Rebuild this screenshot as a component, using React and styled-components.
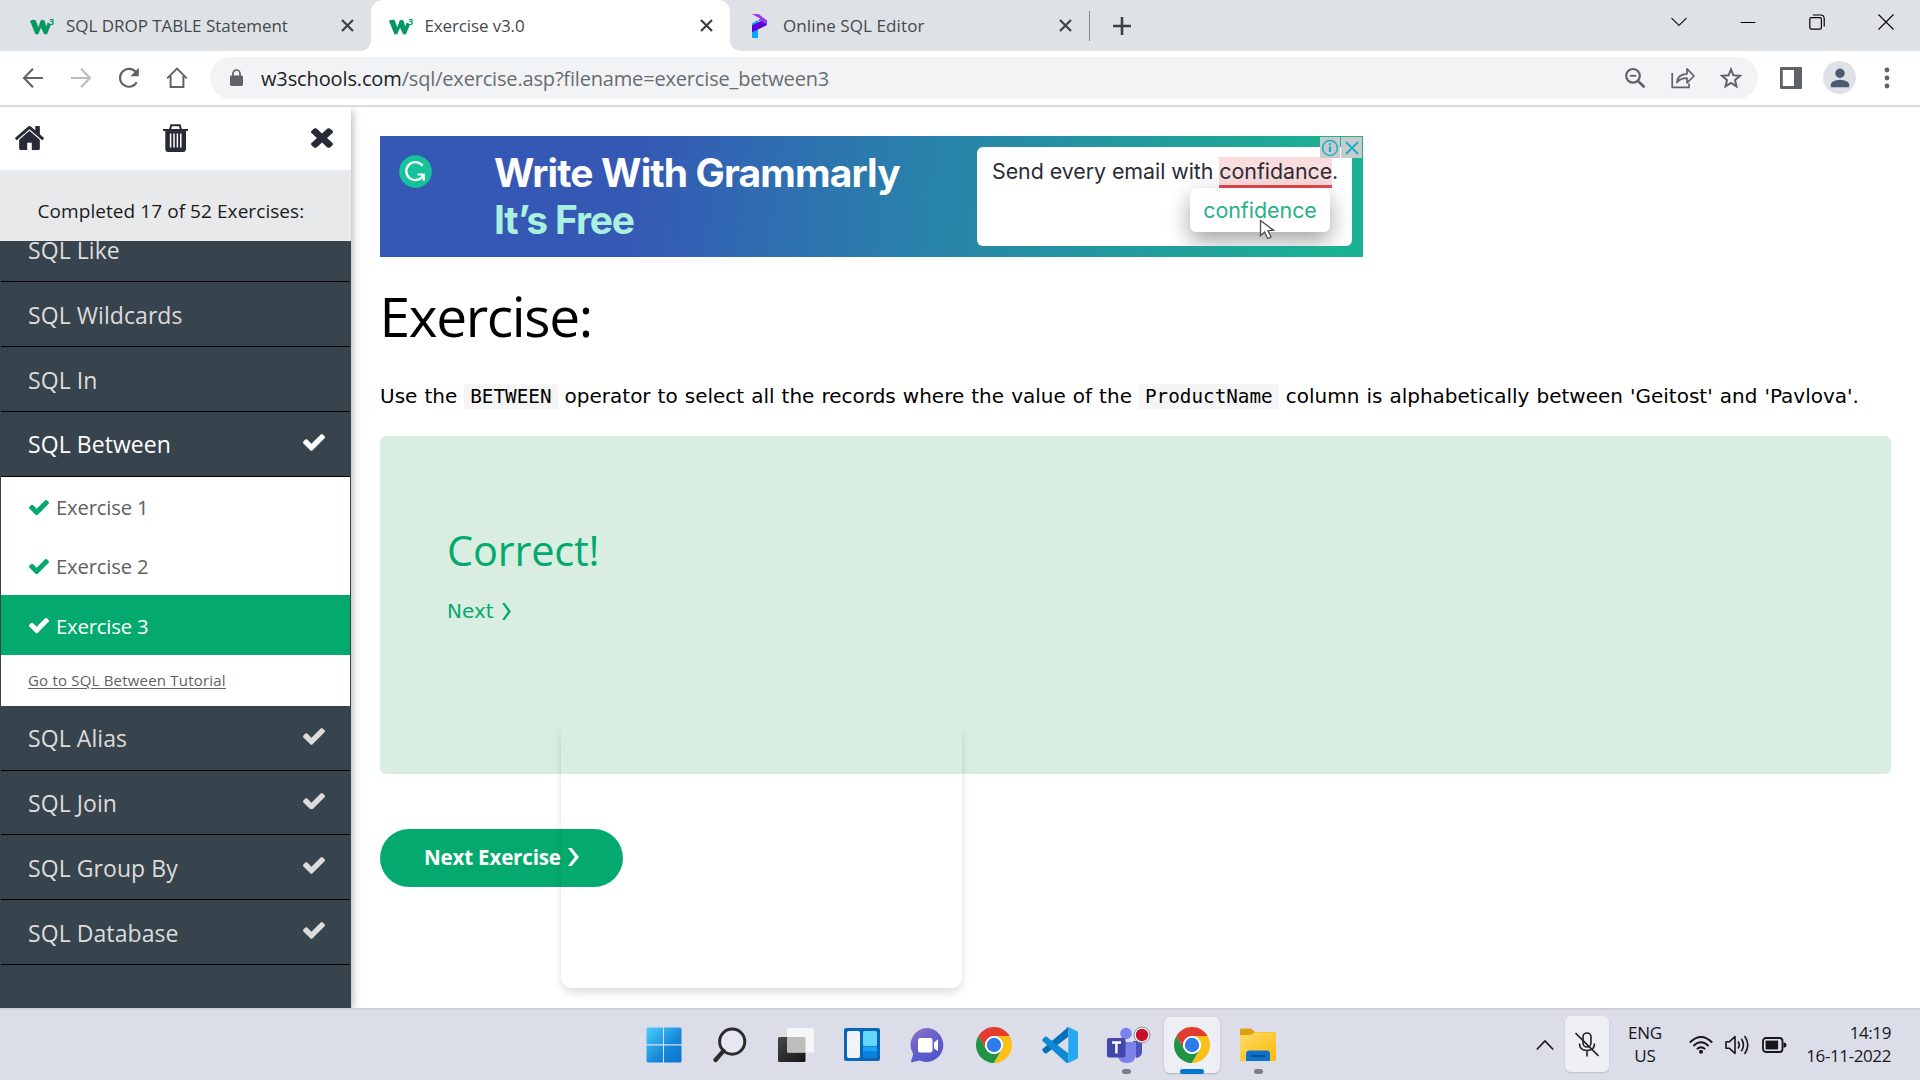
import React from 'react';
import styled, { createGlobalStyle } from 'styled-components';

const ui = '"Open Sans", "Noto Sans", sans-serif';
const verdana = '"DejaVu Sans", sans-serif';

const Global = createGlobalStyle`
  * { box-sizing: border-box; }
  body { margin: 0; background: #fff; overflow: hidden; font-family: ${ui}; }
  svg { display: block; flex: none; }
  a { color: inherit; text-decoration: none; }
`;

const Screen = styled.div`
  width: 1920px;
  height: 1080px;
  display: flex;
  flex-direction: column;
  overflow: hidden;
`;

/* ---------- browser chrome ---------- */

const TabStrip = styled.div`
  height: 51px;
  flex: none;
  display: flex;
  align-items: center;
  background: #dee1e6;
`;

const Tab = styled.div`
  position: relative;
  width: ${p => p.$width}px;
  height: 51px;
  display: flex;
  align-items: center;
  padding: 0 17px 0 ${p => p.$left}px;
  background: ${p => (p.$active ? '#fff' : 'transparent')};
  border-radius: ${p => (p.$active ? '12px 12px 0 0' : '0')};
  ${p => p.$active && `
    &::before, &::after {
      content: '';
      position: absolute;
      bottom: 0;
      width: 10px;
      height: 10px;
    }
    &::before { left: -10px; background: radial-gradient(circle at 0 0, #dee1e6 9.5px, #fff 10px); }
    &::after { right: -10px; background: radial-gradient(circle at 100% 0, #dee1e6 9.5px, #fff 10px); }
  `}
`;

const TabTitle = styled.span`
  flex: 1;
  margin-left: ${p => p.$gap}px;
  font-size: 17px;
  line-height: 51px;
  letter-spacing: ${p => p.$track}px;
  white-space: nowrap;
  color: #45494d;
`;

const TabDivider = styled.div`
  width: 1px;
  height: 30px;
  margin-right: 23px;
  background: #85888c;
`;

const WindowButtons = styled.div`
  margin: 0 26px 8px auto;
  display: flex;
  align-items: center;
  gap: 53px;
`;

const Toolbar = styled.div`
  height: 56px;
  flex: none;
  display: flex;
  align-items: center;
  padding: 0 0 1px 22px;
  border-bottom: 2px solid #dadbdd;
  background: #fff;
`;

const NavButtons = styled.div`
  display: flex;
  gap: 26px;
  width: 188px;
`;

const Omnibox = styled.div`
  width: 1548px;
  height: 42px;
  display: flex;
  align-items: center;
  padding: 0 16px 0 20px;
  border-radius: 21px;
  background: #f1f3f4;
`;

const Address = styled.span`
  flex: 1;
  margin-left: 18px;
  padding-top: 2px;
  font-size: 20px;
  line-height: 40px;
  letter-spacing: -0.17px;
  white-space: nowrap;
  color: #696d71;
  b { font-weight: 400; color: #202124; letter-spacing: -0.13px; }
`;

const OmniActions = styled.div`
  display: flex;
  align-items: center;
  gap: 25px;
`;

const Avatar = styled.div`
  width: 33px;
  height: 33px;
  margin: 0 21px 0 21px;
  border-radius: 50%;
  display: grid;
  place-items: center;
  background: #dee1e6;
`;

/* ---------- page ---------- */

const Page = styled.div`
  height: 901px;
  flex: none;
  display: flex;
  overflow: hidden;
`;

const Sidebar = styled.aside`
  position: relative;
  z-index: 1;
  width: 351px;
  flex: none;
  display: flex;
  flex-direction: column;
  background: #38444d;
  box-shadow: 0 3px 8px rgba(0, 0, 0, 0.3), 0 3px 14px rgba(0, 0, 0, 0.1);
`;

const SideTools = styled.div`
  height: 63px;
  flex: none;
  display: flex;
  align-items: center;
  justify-content: space-between;
  padding: 0 18px 1px 15px;
  background: #fff;
`;

const Progress = styled.div`
  height: 71px;
  flex: none;
  padding: 11px 0 0 37.5px;
  font-size: 19px;
  line-height: 61px;
  letter-spacing: 0.07px;
  white-space: nowrap;
  color: #1b1b1b;
  background: #e7e9eb;
`;

const Topics = styled.nav`
  flex: 1;
  min-height: 0;
  overflow: hidden;
  padding: 0 1px;
`;

const Topic = styled.a`
  display: flex;
  align-items: center;
  justify-content: space-between;
  height: ${p => p.$height || 65}px;
  margin-top: ${p => p.$shift || 0}px;
  padding: ${p => (p.$lift ? 0 : 2)}px 25px 0 27px;
  border-bottom: 1px solid #000;
  font-size: 23px;
  letter-spacing: 0.07px;
  white-space: nowrap;
  color: ${p => (p.$active ? '#fff' : '#dcdcdc')};
  svg { margin-bottom: ${p => (p.$lift ? 3 : 5)}px; }
`;

const Exercises = styled.div`
  height: 229px;
  background: #fff;
`;

const ExerciseLink = styled.a`
  height: ${p => (p.$current ? 60 : 59)}px;
  display: flex;
  align-items: center;
  gap: 7px;
  padding: 1px 0 0 28px;
  font-size: 20.3px;
  white-space: nowrap;
  letter-spacing: -0.2px;
  color: ${p => (p.$current ? '#fff' : '#616161')};
  background: ${p => (p.$current ? '#04aa6d' : '#fff')};
  svg { margin-top: 1px; fill: ${p => (p.$current ? '#fff' : '#04aa6d')}; }
`;

const TutorialLink = styled.a`
  display: block;
  padding-left: 27px;
  font-size: 15px;
  line-height: 50px;
  letter-spacing: 0.2px;
  white-space: nowrap;
  text-decoration: underline;
  text-decoration-thickness: 1px;
  text-underline-offset: 2px;
  color: #616161;
`;

const Main = styled.main`
  position: relative;
  flex: 1;
  padding: 29px 29px 0;
`;

const Banner = styled.div`
  position: relative;
  width: 983px;
  height: 121px;
  display: flex;
  font-family: Inter, sans-serif;
  background: linear-gradient(97deg, #3558b5 0%, #3558b5 26%, #2e70b0 42%, #2980ab 54%, #229a9e 76%, #1bb293 98%);
`;

const BannerLogo = styled.div`
  margin: 19px 0 0 19px;
`;

const BannerTitle = styled.div`
  margin: 13px 0 0 62px;
  font-size: 39px;
  font-weight: 700;
  line-height: 47px;
  letter-spacing: -0.87px;
  white-space: nowrap;
  color: #fff;
  span { display: block; color: #aaf0e0; letter-spacing: -1.15px; }
`;

const MailCard = styled.div`
  position: relative;
  width: 375px;
  height: 99px;
  margin: 11px 11px 0 auto;
  padding: 10px 0 0 15px;
  border-radius: 6px;
  overflow: hidden;
  font-size: 21.4px;
  line-height: 29px;
  letter-spacing: -0.05px;
  white-space: nowrap;
  color: #2b2c38;
  background: #fff;
`;

const Typo = styled.span`
  display: inline-block;
  height: 31px;
  line-height: 29px;
  border-bottom: 3px solid #e5484f;
  background: #fadcdc;
`;

const Suggestion = styled.div`
  position: absolute;
  left: 213px;
  top: 41px;
  width: 140px;
  height: 44px;
  border-radius: 6px;
  line-height: 44px;
  text-align: center;
  letter-spacing: 0;
  color: #2aaf8a;
  background: #fff;
  box-shadow: 0 9px 22px rgba(0, 0, 0, 0.36);
  svg { position: absolute; left: 69px; top: 31px; }
`;

const AdControls = styled.div`
  position: absolute;
  right: 1px;
  top: 1px;
  display: flex;
  gap: 1px;
`;

const AdControl = styled.span`
  width: ${p => p.$width}px;
  height: 21px;
  display: grid;
  place-items: center;
  background: #c9cbcb;
`;

const Heading = styled.h1`
  margin: 21px 0 0 -0.5px;
  font-size: 55px;
  font-weight: 400;
  line-height: 76px;
  letter-spacing: -1.35px;
`;

const Task = styled.p`
  margin: 27px 0 0;
  height: 55px;
  font-family: ${verdana};
  font-size: 20px;
  line-height: 30px;
  word-spacing: 0.68px;
  white-space: nowrap;
  color: #000;
`;

const Code = styled.code`
  display: inline-block;
  padding: 0 6px;
  font-family: "DejaVu Sans Mono", monospace;
  font-size: 19.3px;
  line-height: 25px;
  background: #f5f5f5;
`;

const Result = styled.section`
  height: 338px;
  padding: 86px 67px 0;
  border-radius: 6px;
  color: #04aa6d;
  background: #d9ede1;
  h2 {
    margin: 0;
    font-size: 41.5px;
    font-weight: 400;
    line-height: 56px;
    letter-spacing: -0.2px;
  }
  a {
    display: flex;
    align-items: center;
    gap: 8px;
    margin-top: 18px;
    font-family: ${verdana};
    font-size: 20px;
    line-height: 30px;
  }
`;

const NextButton = styled.a`
  width: 243px;
  height: 58px;
  margin-top: 55px;
  display: flex;
  align-items: center;
  gap: 7px;
  padding: 0 0 2px 44px;
  border-radius: 29px;
  font-size: 20.6px;
  font-weight: 700;
  letter-spacing: -0.2px;
  white-space: nowrap;
  color: #fff;
  background: #04aa6d;
`;

const FadingPopup = styled.div`
  position: absolute;
  left: 210px;
  top: 617px;
  width: 401px;
  height: 264px;
  border-radius: 12px;
  box-shadow: 0 5px 9px rgba(0, 0, 0, 0.13);
  clip-path: path('M-20 0 V290 H421 V0 H401 V252 Q401 264 389 264 H12 Q0 264 0 252 V0 Z');
`;

/* ---------- taskbar ---------- */

const Taskbar = styled.footer`
  height: 72px;
  flex: none;
  display: flex;
  align-items: center;
  padding: 2px 29px 0 630.6px;
  box-shadow: inset 0 2px #cfcfdb;
  background: #dbdde9;
`;

const AppSlot = styled.div`
  position: relative;
  width: 66.1px;
  height: 56px;
  display: grid;
  place-items: center;
  &::before {
    content: '';
    position: absolute;
    inset: 0 5px;
    border-radius: 6px;
    background: ${p => (p.$active ? '#eeeff5' : 'transparent')};
    box-shadow: ${p => (p.$active ? '0 1px 2px rgba(60, 60, 90, 0.25)' : 'none')};
  }
  &::after {
    content: '';
    position: absolute;
    left: calc(50% - ${p => (p.$active ? 12 : 4.5)}px);
    bottom: -1px;
    width: ${p => (p.$active ? 24 : 9)}px;
    height: 5px;
    border-radius: 3px;
    background: ${p => (p.$active ? '#0078d4' : p.$running ? '#7c7d86' : 'transparent')};
  }
  svg { position: relative; margin-left: ${p => p.$nudge || 0}px; }
`;

const Tray = styled.div`
  margin-left: auto;
  display: flex;
  align-items: center;
  color: #17171b;
`;

const MicTile = styled.div`
  width: 44px;
  height: 56px;
  margin: -2px 19px 0 11px;
  display: grid;
  place-items: center;
  border-radius: 6px;
  background: #eeeff5;
  box-shadow: 0 1px 2px rgba(60, 60, 90, 0.2);
`;

const TrayText = styled.div`
  width: ${p => p.$width}px;
  margin-right: ${p => p.$after || 0}px;
  padding-bottom: ${p => p.$below || 0}px;
  text-align: ${p => p.$align};
  font-size: 17px;
  line-height: 22.5px;
  letter-spacing: ${p => p.$track}px;
  white-space: nowrap;
`;

const StatusIcons = styled.div`
  display: flex;
  align-items: center;
  gap: 12px;
`;

/* ---------- icons ---------- */

const Line = ({ w, h = w, vb, sw = 2, c = '#5f6368', children }) => (
  <svg width={w} height={h} viewBox={vb || `0 0 ${w} ${h}`} fill="none" stroke={c} strokeWidth={sw}>{children}</svg>
);

const Cross = () => <Line w={13} c="#3c4043" sw={2.2}><path d="M1 1l11 11M12 1L1 12" /></Line>;

const Check = ({ size, fill }) => (
  <svg width={size} height={size * 0.766} viewBox="121 334 1550 1188" fill={fill}>
    <path d="M1671 566q0 40-28 68l-724 724-136 136q-28 28-68 28t-68-28l-136-136-362-362q-28-28-28-68t28-68l136-136q28-28 68-28t68 28l294 295 656-657q28-28 68-28t68 28l136 136q28 28 28 68z" />
  </svg>
);

const Chevron = ({ w, h, sw, c }) => (
  <svg width={w} height={h} viewBox="0 0 10 18" preserveAspectRatio="none" fill={c}>
    <path d={`M0 0H${sw}L10 9L${sw} 18H0L${9.6 - sw} 9Z`} />
  </svg>
);

const W3Logo = () => (
  <svg width="24" height="24" viewBox="0 0 24 24">
    <path d="M0 7Q2.5 5.2 5.5 6L8.4 13.2L10.6 6.4Q13 5 14.8 7.2L16.3 12.6L17.6 8.4L19.6 9.4Q20.8 10 20.6 11.6L17 20.2H14.2L11 13.8L8.2 20.2H5.4Z" fill="#059862" />
    <text x="18.9" y="10.6" fontFamily="Open Sans" fontSize="9" fontWeight="700" fill="#059862">3</text>
  </svg>
);

const PLogo = () => (
  <svg width="16" height="24" viewBox="0 0 16 24">
    <path d="M0 9.5L6 6V24H0Z" fill="#0aa5ff" />
    <path d="M0 11.5L10 6.5L15 7.5V11L0 18.2Z" fill="#5b00d6" />
    <path d="M0 0H6.5L15 6.6V11L8.2 6.4L5.5 8L8 4.6Z" fill="#9b36f5" />
  </svg>
);

const ChromeLogo = () => (
  <svg width="36" height="36" viewBox="0 0 48 48">
    <path d="M3.22 12A24 24 0 0 1 44.78 12H24A12 12 0 0 0 13.61 30Z" fill="#e33b2e" />
    <path d="M3.22 12L13.61 30A12 12 0 0 0 34.39 30L24 48A24 24 0 0 1 3.22 12Z" fill="#229342" />
    <path d="M44.78 12A24 24 0 0 1 24 48L34.39 30A12 12 0 0 0 24 12Z" fill="#fbc116" />
    <circle cx="24" cy="24" r="12" fill="#fff" />
    <circle cx="24" cy="24" r="9.6" fill="#2f7bea" />
  </svg>
);

const WindowsLogo = () => (
  <svg width="36" height="36" viewBox="0 0 36 36">
    <defs><linearGradient id="win" x1="0" y1="0" x2="1" y2="1"><stop stopColor="#4ccdfd" /><stop offset=".6" stopColor="#1688d8" /><stop offset="1" stopColor="#0b74cc" /></linearGradient></defs>
    <path d="M2 .5H17V17.2H.5V2Q.5.5 2 .5ZM18 .5H34Q35.5.5 35.5 2V17.2H18ZM.5 18.4H17V35.5H2Q.5 35.5.5 34ZM18 18.4H35.5V34Q35.5 35.5 34 35.5H18Z" fill="url(#win)" />
  </svg>
);

const SearchLogo = () => (
  <svg width="34" height="36" viewBox="0 0 34 36" fill="none" stroke="#2b2b2c">
    <circle cx="19.2" cy="14.6" r="12.6" strokeWidth="3" fill="#e6e7f0" />
    <path d="M10.5 23.8L2.5 33" strokeWidth="4.2" strokeLinecap="round" />
  </svg>
);

const TaskViewLogo = () => (
  <svg width="36" height="36" viewBox="0 0 36 36">
    <defs><linearGradient id="tv" x1="0" y1="0" x2="1" y2="1"><stop stopColor="#484848" /><stop offset="1" stopColor="#151515" /></linearGradient></defs>
    <rect x="0" y="10" width="27.5" height="25" rx="1.5" fill="url(#tv)" />
    <rect x="9" y="1" width="27" height="24.5" rx="1.5" fill="#f6f6f6" />
    <rect x="9" y="10" width="18.5" height="15.5" fill="#bdbdbd" />
  </svg>
);

const WidgetsLogo = () => (
  <svg width="36" height="34" viewBox="0 0 36 34">
    <rect width="36" height="33" rx="2" fill="#0a66b8" />
    <rect x="3" y="3" width="13" height="27" rx="2" fill="#f1f3f5" />
    <rect x="19" y="3" width="14" height="15" rx="1.5" fill="#63d8fb" />
    <rect x="19" y="18.5" width="14" height="5" fill="#1aa3f5" />
    <rect x="19" y="23.5" width="14" height="6.5" rx="1.5" fill="#0d80dc" />
  </svg>
);

const ChatLogo = () => (
  <svg width="36" height="36" viewBox="0 0 36 36">
    <defs><linearGradient id="chat" x1="0" y1="0" x2=".6" y2="1"><stop stopColor="#9a74c0" /><stop offset=".45" stopColor="#6a62cc" /><stop offset="1" stopColor="#5055c9" /></linearGradient></defs>
    <path d="M18 1A17 17 0 1 1 9.5 33.5L2 35.3Q.8 35.5 1.1 34.2L3.2 27A17 17 0 0 1 18 1Z" fill="url(#chat)" />
    <rect x="8" y="11" width="14.5" height="14.5" rx="2" fill="#fff" />
    <path d="M24 15.5L28 12.3V24.3L24 21.2Z" fill="#fff" />
  </svg>
);

const CodeLogo = () => (
  <svg width="36" height="36" viewBox="0 0 100 100">
    <path d="M73 0V27L14 72Q10 75 7 72L2 67Q-1 63 3 60Z" fill="#0071ba" />
    <path d="M73 100V73L14 28Q10 25 7 28L2 33Q-1 37 3 40L66 98Q69 101 73 100Z" fill="#0f8ad6" />
    <path d="M73 0L97 11Q100 13 100 16V84Q100 87 97 89L73 100Q70 101 67 98Q73 100 73 94V6Q73 0 67 2Q70 -1 73 0Z" fill="#26a8f0" />
  </svg>
);

const TeamsLogo = () => (
  <svg width="44" height="38" viewBox="0 0 44 38">
    <path d="M26 15H35V26Q35 31 29 32Z" fill="#4b53bc" />
    <circle cx="19" cy="7.5" r="5.8" fill="#7b83eb" />
    <path d="M11 16H29V27Q29 37 20 37Q11 37 10 27Z" fill="#7b83eb" />
    <rect x="0" y="12" width="18.5" height="19.5" rx="2" fill="#4347ab" />
    <path d="M5 16.5H14M9.4 16.5V27.5" stroke="#fff" strokeWidth="2.4" />
    <circle cx="35" cy="9" r="7.9" fill="#fff" stroke="#777" strokeWidth=".8" />
    <circle cx="35" cy="9" r="6.2" fill="#c50f2b" />
  </svg>
);

const FolderLogo = () => (
  <svg width="36" height="34" viewBox="0 0 36 34">
    <defs><linearGradient id="fold" x1="0" y1="0" x2="1" y2="1"><stop stopColor="#ffdc6b" /><stop offset="1" stopColor="#fdb906" /></linearGradient></defs>
    <path d="M0 2Q0 .5 1.5.5H11L15 4H34Q36 4 36 6V12H0Z" fill="#dfa00f" />
    <path d="M0 7H11L15 4.3H36V33H0Z" fill="url(#fold)" />
    <path d="M6 26Q6 22.5 9.5 22.5H26.5Q30 22.5 30 26V33H6Z" fill="#0a73c7" />
    <path d="M11.5 28H24.5" stroke="#064f91" strokeWidth="1.8" strokeLinecap="round" />
  </svg>
);

const topicsBefore = [
  { name: 'SQL Like', shift: -24 },
  { name: 'SQL Wildcards' },
  { name: 'SQL In' },
  { name: 'SQL Between', active: true, done: true, lift: true },
];
const topicsAfter = [
  { name: 'SQL Alias', height: 65, lift: true },
  { name: 'SQL Join', height: 64, lift: true },
  { name: 'SQL Group By', height: 65 },
  { name: 'SQL Database', height: 65 },
];

export default function App() {
  return (
    <Screen>
      <Global />
      <TabStrip>
        <Tab $width={371} $left={30}><W3Logo /><TabTitle $gap={12} $track={-0.03}>SQL DROP TABLE Statement</TabTitle><Cross /></Tab>
        <Tab $width={359} $left={18} $active><W3Logo /><TabTitle $gap={11.5} $track={-0.13}>Exercise v3.0</TabTitle><Cross /></Tab>
        <Tab $width={359} $left={22}><PLogo /><TabTitle $gap={15} $track={0.1}>Online SQL Editor</TabTitle><Cross /></Tab>
        <TabDivider />
        <Line w={18} c="#3c4043" sw={2.6}><path d="M9 0V18M0 9H18" /></Line>
        <WindowButtons>
          <Line w={16} c="#222" sw={1.1}><path d="M.5 4L8 11.5L15.5 4" /></Line>
          <Line w={16} c="#000" sw={1}><path d="M.5 8.5H15.5" /></Line>
          <Line w={16} c="#000" sw={1.2}><rect x=".8" y="3.6" width="11.6" height="11.6" rx="1.6" /><path d="M3.8 1H11.5Q15.2 1 15.2 4.7V12.5" /></Line>
          <Line w={16} c="#000" sw={1.1}><path d="M.5.5L15.5 15.5M15.5.5L.5 15.5" /></Line>
        </WindowButtons>
      </TabStrip>

      <Toolbar>
        <NavButtons>
          <Line w={22} sw={2.1}><path d="M21 11H2.5M11 1.8L2 11L11 20.2" /></Line>
          <Line w={22} sw={2.1} c="#babcbe"><path d="M1 11H19.5M11 1.8L20 11L11 20.2" /></Line>
          <Line w={22} sw={2.2}><path d="M18.7 15.2A8.9 8.9 0 1 1 18 5.4" /><path d="M20.8 .8V9.2H12.4Z" fill="#5f6368" stroke="none" /></Line>
          <Line w={22} sw={2}><path d="M1.2 11.4L11 1.6L20.8 11.4M4.6 9V20H17.4V9" /></Line>
        </NavButtons>
        <Omnibox>
          <svg width="13" height="17" viewBox="0 0 13 17"><rect x="0" y="6.5" width="13" height="10.5" rx="1.4" fill="#5f6368" /><path d="M3 8V4.5a3.5 3.5 0 0 1 7 0V8" fill="none" stroke="#5f6368" strokeWidth="1.7" /></svg>
          <Address><b>w3schools.com</b>/sql/exercise.asp?filename=exercise_between3</Address>
          <OmniActions>
            <Line w={22} sw={2.2}><circle cx="9" cy="8.8" r="6.8" /><path d="M13.8 13.8L20.5 20.3" strokeWidth="2.7" /><path d="M5.8 8.8H12.2" strokeWidth="1.8" /></Line>
            <Line w={24} h={22} sw={1.7}><path d="M1.2 6V20.4H18V16.5" /><path d="M6 15.5Q6.5 7.2 16 6.8V1.8L23 9L16 15.8V11.2Q9.5 11 6 15.5Z" strokeLinejoin="round" /></Line>
            <Line w={22} sw={2}><path d="M11 2.4L13.4 8.3L20 8.8L15 13L16.5 19.4L11 16L5.5 19.4L7 13L2 8.8L8.6 8.3Z" /></Line>
          </OmniActions>
        </Omnibox>
        <svg style={{ marginLeft: 22 }} width="22" height="22" viewBox="0 0 22 22"><rect width="22" height="22" rx="1" fill="#5f6368" /><rect x="2.8" y="3" width="11.2" height="16" fill="#fff" /></svg>
        <Avatar><svg width="20" height="20" viewBox="0 0 20 20" fill="#4c5a70"><circle cx="10" cy="5.3" r="4.7" /><path d="M.8 19.2V16.5Q1.5 12.2 10 11.8Q18.5 12.2 19.2 16.5V19.2Z" /></svg></Avatar>
        <svg style={{ marginLeft: 7 }} width="6" height="22" viewBox="0 0 6 22" fill="#5f6368"><circle cx="3" cy="3" r="2.4" /><circle cx="3" cy="11" r="2.4" /><circle cx="3" cy="19" r="2.4" /></svg>
      </Toolbar>

      <Page>
        <Sidebar>
          <SideTools>
            <svg width="29" height="24" viewBox="89 250 1614 1290" preserveAspectRatio="none" fill="#282a35"><path d="M1472 992v480q0 26-19 45t-45 19h-384v-384h-256v384h-384q-26 0-45-19t-19-45v-480q0-1 .5-3t.5-3l575-474 575 474q1 2 1 6zm223-69l-62 74q-8 9-21 11h-3q-13 0-21-7l-692-577-692 577q-12 8-24 7-13-2-21-11l-62-74q-8-10-7-23.5t11-21.5l719-599q32-26 76-26t76 26l244 204v-195q0-14 9-23t23-9h192q14 0 23 9t9 23v408l219 182q10 8 11 21.5t-7 23.5z" /></svg>
            <svg width="29" height="28" viewBox="0 0 29 28"><path d="M0 5H25V7H23V24.5Q23 28 20 28H5Q2.3 28 2.3 24.5V7H0Z" fill="#282a35" /><path d="M7 5.5L8.2 1.3H16.8L18 5.5" fill="none" stroke="#282a35" strokeWidth="2" /><path d="M7.6 9.5V23.5M11 9.5V23.5M14.4 9.5V23.5M17.8 9.5V23.5" stroke="#fff" strokeWidth="1.5" /></svg>
            <svg width="22" height="22" viewBox="302 366 1188 1324" preserveAspectRatio="none" fill="#282a35"><path transform="translate(0 68)" d="M1490 1322q0 40-28 68l-136 136q-28 28-68 28t-68-28l-294-294-294 294q-28 28-68 28t-68-28l-136-136q-28-28-28-68t28-68l294-294-294-294q-28-28-28-68t28-68l136-136q28-28 68-28t68 28l294 294 294-294q28-28 68-28t68 28l136 136q28 28 28 68t-28 68l-294 294 294 294q28 28 28 68z" /></svg>
          </SideTools>
          <Progress>Completed 17 of 52 Exercises:</Progress>
          <Topics>
            {topicsBefore.map(t => (
              <Topic key={t.name} $shift={t.shift} $active={t.active} $lift={t.lift}>{t.name}{t.done && <Check size={22} fill="#fff" />}</Topic>
            ))}
            <Exercises>
              <ExerciseLink><Check size={20} />Exercise 1</ExerciseLink>
              <ExerciseLink><Check size={20} />Exercise 2</ExerciseLink>
              <ExerciseLink $current><Check size={20} />Exercise 3</ExerciseLink>
              <TutorialLink>Go to SQL Between Tutorial</TutorialLink>
            </Exercises>
            {topicsAfter.map(t => (
              <Topic key={t.name} $height={t.height} $lift={t.lift}>{t.name}<Check size={22} fill="#dcdcdc" /></Topic>
            ))}
          </Topics>
        </Sidebar>

        <Main>
          <Banner>
            <BannerLogo>
              <svg width="33" height="33" viewBox="0 0 33 33"><circle cx="16.5" cy="16.5" r="16.3" fill="#15c39a" /><path d="M23.6 10.8A9 9 0 1 0 24.6 19.6" fill="none" stroke="#fff" strokeWidth="2.3" /><path d="M18.6 19.4H24.8V26" fill="none" stroke="#fff" strokeWidth="2" /></svg>
            </BannerLogo>
            <BannerTitle>Write With Grammarly<span>It’s Free</span></BannerTitle>
            <MailCard>
              Send every email with <Typo>confidance</Typo>.
              <Suggestion>
                confidence
                <svg width="16" height="21" viewBox="0 0 16 21"><path d="M1.5 1.5V16.5L5.6 13L8.8 19.5L12 18L9 11.7L14.5 11.2Z" fill="#fff" stroke="#4a4a55" strokeWidth="1.3" /></svg>
              </Suggestion>
            </MailCard>
            <AdControls>
              <AdControl $width={20}><Line w={18} c="#16aecb" sw={1.5}><circle cx="9" cy="9" r="7.4" /><path d="M9 7.5V13M9 4.2V6.2" strokeWidth="2.2" /></Line></AdControl>
              <AdControl $width={21}><Line w={14} c="#16aecb" sw={1.9}><path d="M1 1L13 13M13 1L1 13" /></Line></AdControl>
            </AdControls>
          </Banner>
          <Heading>Exercise:</Heading>
          <Task>
            Use the <Code>BETWEEN</Code> operator to select all the records where the value of the <Code>ProductName</Code> column is alphabetically between 'Geitost' and 'Pavlova'.
          </Task>
          <Result>
            <h2>Correct!</h2>
            <a>Next <Chevron w={9} h={17} sw={3} c="#04aa6d" /></a>
          </Result>
          <NextButton>Next Exercise<Chevron w={11} h={18} sw={3.4} c="#fff" /></NextButton>
          <FadingPopup />
        </Main>
      </Page>

      <Taskbar>
        <AppSlot><WindowsLogo /></AppSlot>
        <AppSlot><SearchLogo /></AppSlot>
        <AppSlot><TaskViewLogo /></AppSlot>
        <AppSlot><WidgetsLogo /></AppSlot>
        <AppSlot><ChatLogo /></AppSlot>
        <AppSlot><ChromeLogo /></AppSlot>
        <AppSlot><CodeLogo /></AppSlot>
        <AppSlot $running $nudge={6}><TeamsLogo /></AppSlot>
        <AppSlot $active><ChromeLogo /></AppSlot>
        <AppSlot $running><FolderLogo /></AppSlot>
        <Tray>
          <Line w={18} h={12} c="#17171b" sw={1.6}><path d="M.8 10.5L9 2L17.2 10.5" /></Line>
          <MicTile>
            <Line w={24} h={25} c="#222226" sw={1.6}><rect x="8" y="1" width="8" height="14" rx="4" /><path d="M4.5 11.5Q4.5 18.5 12 18.5Q19.5 18.5 19.5 11.5M12 18.5V24.5M.5 1L23.5 24" /></Line>
          </MicTile>
          <TrayText $width={34} $after={27} $align="center" $track={-0.2} $below={1}>ENG<br />US</TrayText>
          <StatusIcons>
            <Line w={24} h={20} c="#17171b" sw={1.8}><path d="M.8 7.5Q12 -3.5 23.2 7.5M4.4 11Q12 3.6 19.6 11M7.8 14.2Q12 10.2 16.2 14.2" /><circle cx="12" cy="16.8" r="2" fill="#17171b" stroke="none" /></Line>
            <Line w={25} h={20} c="#17171b" sw={1.6}><path d="M1 6.7H4.5L10 1.5V18.5L4.5 13.3H1Z" strokeLinejoin="round" /><path d="M13 6.5Q15.5 10 13 13.5M16.3 3.8Q20.6 10 16.3 16.2M19.6 1Q26 10 19.6 19" /></Line>
            <Line w={25} h={18} c="#17171b" sw={1.8}><rect x="1" y="2" width="19.5" height="14" rx="3" /><rect x="3.6" y="4.6" width="12.5" height="8.8" fill="#17171b" stroke="none" /><path d="M21.5 6.5Q24.5 6 24.5 9Q24.5 12 21.5 11.5Z" fill="#17171b" stroke="none" /></Line>
          </StatusIcons>
          <TrayText $width={104} $align="right" $track={-0.4} $below={1}>14:19<br />16-11-2022</TrayText>
        </Tray>
      </Taskbar>
    </Screen>
  );
}
